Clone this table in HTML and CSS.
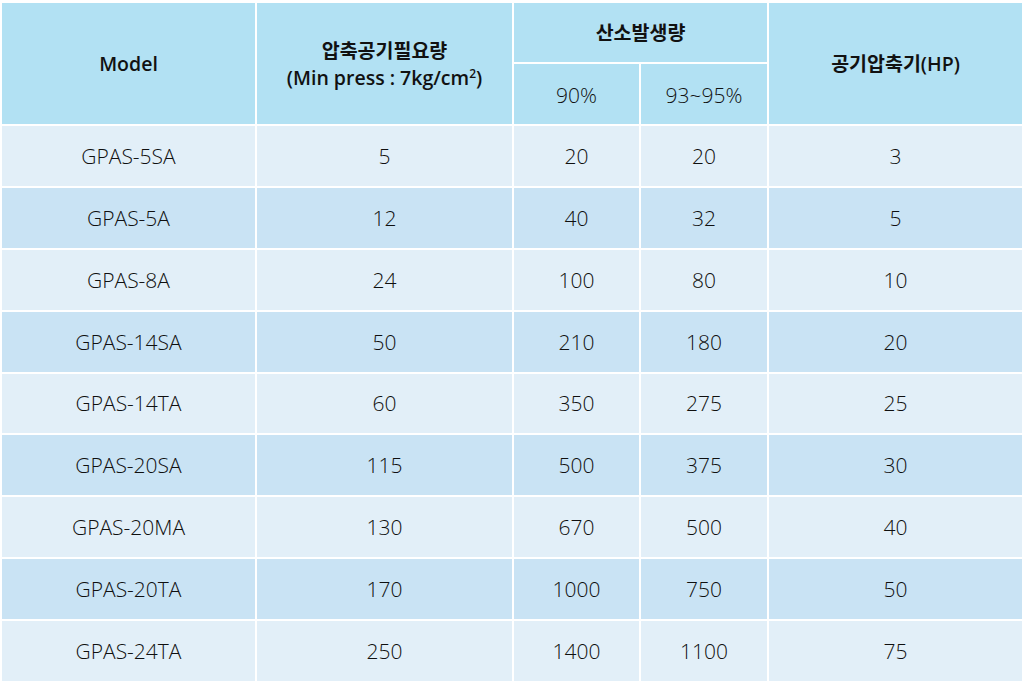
FILE: index.html
```html
<!DOCTYPE html>
<html lang="ko">
<head>
<meta charset="utf-8">
<link rel="stylesheet" href="styles.css">
</head>
<body>
<table class="spec">
  <colgroup>
    <col class="c-model"><col class="c-air"><col class="c-o90"><col class="c-o93"><col class="c-hp">
  </colgroup>
  <thead>
    <tr class="h1">
      <th rowspan="2">Model</th>
      <th rowspan="2">압축공기필요량<br>(Min press : 7kg/cm<sup>2</sup>)</th>
      <th colspan="2">산소발생량</th>
      <th rowspan="2">공기압축기(HP)</th>
    </tr>
    <tr class="h2">
      <th class="sub">90%</th>
      <th class="sub">93~95%</th>
    </tr>
  </thead>
  <tbody>
    <tr><td>GPAS-5SA</td><td>5</td><td>20</td><td>20</td><td>3</td></tr>
    <tr><td>GPAS-5A</td><td>12</td><td>40</td><td>32</td><td>5</td></tr>
    <tr><td>GPAS-8A</td><td>24</td><td>100</td><td>80</td><td>10</td></tr>
    <tr><td>GPAS-14SA</td><td>50</td><td>210</td><td>180</td><td>20</td></tr>
    <tr><td>GPAS-14TA</td><td>60</td><td>350</td><td>275</td><td>25</td></tr>
    <tr><td>GPAS-20SA</td><td>115</td><td>500</td><td>375</td><td>30</td></tr>
    <tr><td>GPAS-20MA</td><td>130</td><td>670</td><td>500</td><td>40</td></tr>
    <tr><td>GPAS-20TA</td><td>170</td><td>1000</td><td>750</td><td>50</td></tr>
    <tr><td>GPAS-24TA</td><td>250</td><td>1400</td><td>1100</td><td>75</td></tr>
  </tbody>
</table>
</body>
</html>
```
FILE: styles.css
```css
html, body {
  margin: 0;
  padding: 0;
  background: #ffffff;
}
body {
  padding-top: 1px;
  font-family: "Open Sans", "Noto Sans CJK KR", sans-serif;
}
.spec {
  width: 1024px;
  border-collapse: separate;
  border-spacing: 2px;
  table-layout: fixed;
}
.c-model { width: 253px; }
.c-air { width: 255px; }
.c-o90 { width: 125px; }
.c-o93 { width: 126px; }
.c-hp { width: 253px; }
.spec th, .spec td {
  padding: 0;
  text-align: center;
  vertical-align: middle;
}
.spec th {
  background: #b2e1f3;
  color: #111;
  font-size: 19.5px;
  font-weight: 600;
  line-height: 27px;
}
.spec th sup {
  font-size: 12px;
  line-height: 0;
  vertical-align: 7px;
  font-weight: 600;
}
.spec .h1 th { height: 59px; }
.spec .h2 th { height: 58px; }
.spec th.sub {
  font-weight: 300;
  color: #111;
  font-size: 21px;
  padding-top: 2px;
}
.spec td {
  height: 59.875px;
  font-size: 21px;
  color: #0f0f0f;
  font-weight: 300;
}
.spec tbody tr:nth-child(odd) td { background: #e2eff8; }
.spec tbody tr:nth-child(even) td { background: #c9e3f4; }
```
